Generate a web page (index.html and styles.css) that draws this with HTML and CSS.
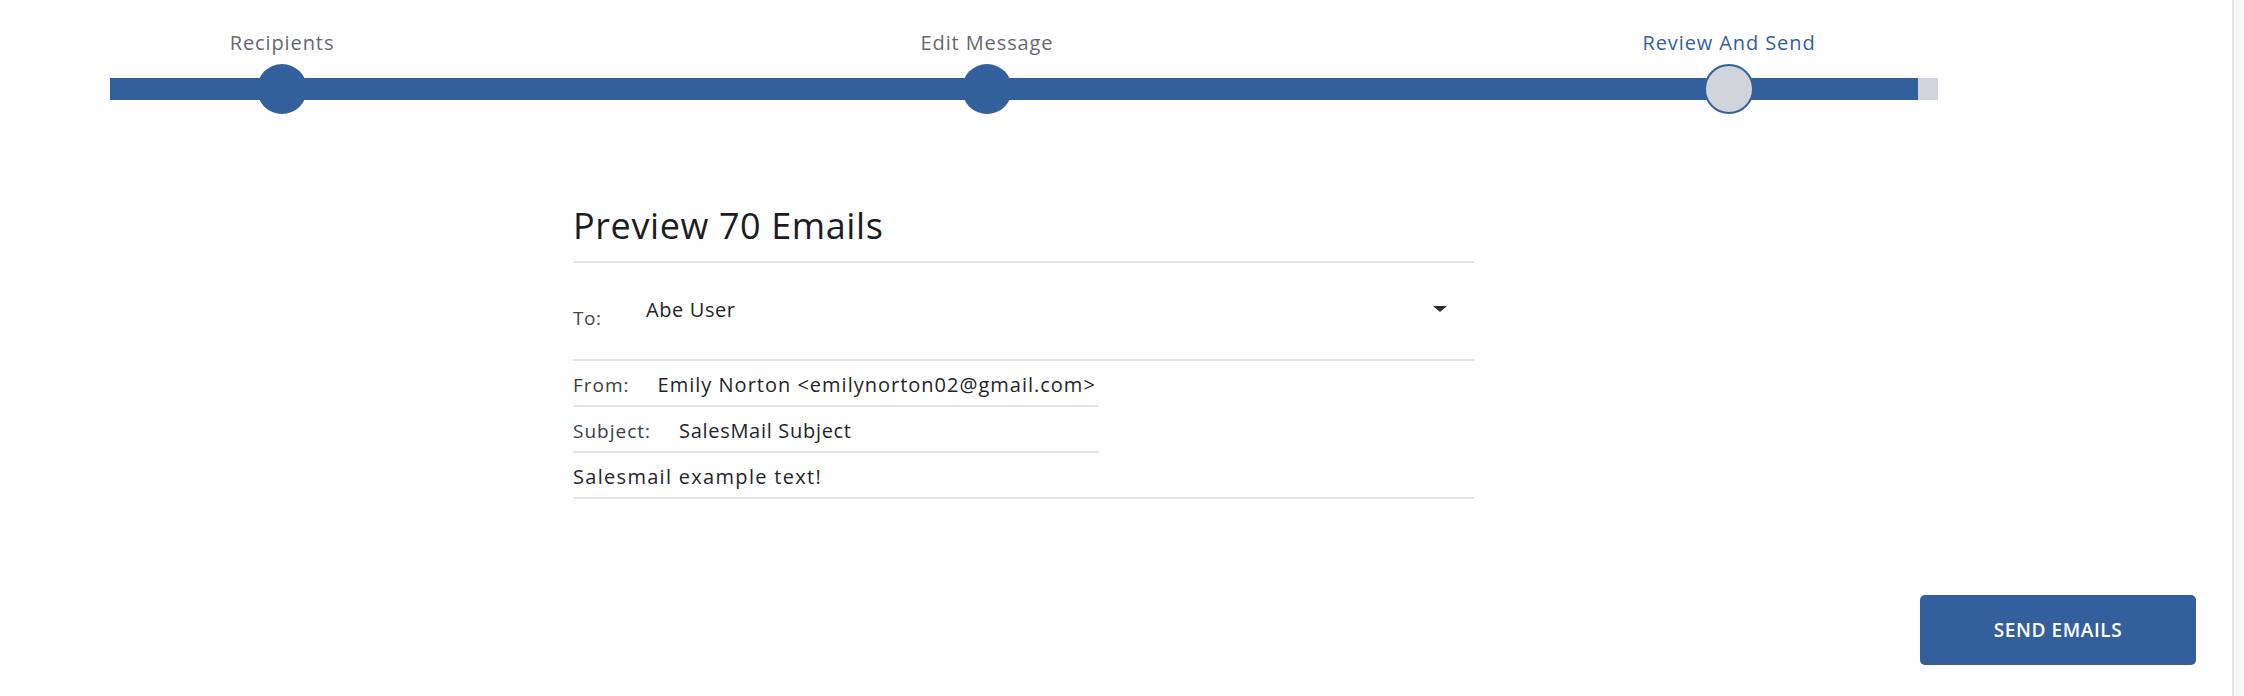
FILE: index.html
```html
<!DOCTYPE html>
<html lang="en">
<head>
    <meta charset="UTF-8">
    <title>Review And Send</title>
    <link rel="stylesheet" href="styles.css">
</head>
<body>
    <div class="page">
        <div class="stepper">
            <div class="track"><div class="track-fill"></div></div>
            <div class="steps">
                <div class="step done">
                    <span class="step-label">Recipients</span>
                    <span class="step-dot"></span>
                </div>
                <div class="step done">
                    <span class="step-label">Edit Message</span>
                    <span class="step-dot"></span>
                </div>
                <div class="step active">
                    <span class="step-label">Review And Send</span>
                    <span class="step-dot"></span>
                </div>
            </div>
        </div>

        <main class="preview">
            <h1 class="preview-title">Preview 70 Emails</h1>

            <div class="to-row">
                <span class="to-label">To:</span>
                <span class="to-value">Abe User</span>
                <span class="caret"></span>
            </div>

            <div class="field short">
                <span class="field-label">From:</span>
                <span class="field-value">Emily Norton &lt;emilynorton02@gmail.com&gt;</span>
            </div>
            <div class="field short">
                <span class="field-label">Subject:</span>
                <span class="field-value subject">SalesMail Subject</span>
            </div>
            <div class="field">
                <span class="field-value">Salesmail example text!</span>
            </div>
        </main>

        <div class="actions">
            <button class="send-btn">SEND EMAILS</button>
        </div>
    </div>
    <div class="scrollbar"></div>
</body>
</html>
```

FILE: styles.css
```css
* {
    margin: 0;
    padding: 0;
    box-sizing: border-box;
}

body {
    display: flex;
    height: 696px;
    overflow: hidden;
    background: #ffffff;
    font-family: 'Open Sans', sans-serif;
    color: #23252b;
}

.page {
    flex: 1;
}

.scrollbar {
    width: 12px;
    border-left: 2px solid #e4e4ea;
    background: #f8f8f9;
}

/* Stepper */
.stepper {
    position: relative;
    margin-left: 110px;
    width: 1828px;
    padding-top: 30px;
}

.track {
    position: absolute;
    left: 0;
    right: 0;
    top: 78px;
    height: 22px;
    background: #d1d4da;
}

.track-fill {
    width: 1808px;
    height: 100%;
    background: #335f9d;
}

.steps {
    position: relative;
    display: grid;
    grid-template-columns: 344px 1066px 418px;
}

.step {
    display: flex;
    flex-direction: column;
    align-items: center;
}

.step-label {
    font-size: 20px;
    line-height: 26px;
    letter-spacing: 0.9px;
    color: #67676f;
}

.step-dot {
    width: 50px;
    height: 50px;
    margin-top: 8px;
    border-radius: 50%;
    background: #335f9d;
}

.step.active .step-label {
    color: #335f9d;
}

.step.active .step-dot {
    background: #d1d4da;
    border: 2px solid #335f9d;
}

/* Preview */
.preview {
    width: 901px;
    margin-left: 573px;
    margin-top: 90px;
}

.preview-title {
    font-size: 36px;
    font-weight: 400;
    line-height: 44px;
    letter-spacing: 0.6px;
    color: #1c1d24;
    padding-bottom: 13px;
    border-bottom: 2px solid #e2e2e8;
}

.to-row {
    display: flex;
    align-items: center;
    height: 98px;
    border-bottom: 2px solid #e2e2e8;
}

.to-label {
    width: 73px;
    font-size: 19px;
    letter-spacing: 0.5px;
    color: #45464d;
    margin-top: 14px;
}

.to-value {
    flex: 1;
    font-size: 20px;
    letter-spacing: 0.6px;
    color: #23252b;
    margin-top: -4px;
}

.caret {
    width: 0;
    height: 0;
    margin-right: 27px;
    margin-top: -4px;
    border-left: 7px solid transparent;
    border-right: 7px solid transparent;
    border-top: 6px solid #2e2f33;
}

.field {
    display: flex;
    align-items: flex-end;
    height: 46px;
    padding-bottom: 8px;
    border-bottom: 2px solid #e2e2e8;
    font-size: 19px;
    line-height: 24px;
    letter-spacing: 1px;
    white-space: nowrap;
}

.field.short {
    width: 526px;
}

.field-label {
    margin-right: 28px;
    color: #3b3d44;
}

.field-value {
    color: #23252b;
}

.field.short .field-value {
    font-size: 20px;
    letter-spacing: 1px;
}

.field.short .field-value.subject {
    letter-spacing: 0.7px;
}

.field:last-child .field-value {
    font-size: 20px;
    letter-spacing: 1.3px;
}

/* Actions */
.actions {
    display: flex;
    justify-content: flex-end;
    padding-right: 36px;
    margin-top: 96px;
}

.send-btn {
    width: 276px;
    height: 70px;
    border: none;
    border-radius: 5px;
    background: #335f9d;
    color: #ffffff;
    font-family: 'Open Sans', sans-serif;
    font-size: 19px;
    font-weight: 600;
    letter-spacing: 0.6px;
    cursor: pointer;
}
```
